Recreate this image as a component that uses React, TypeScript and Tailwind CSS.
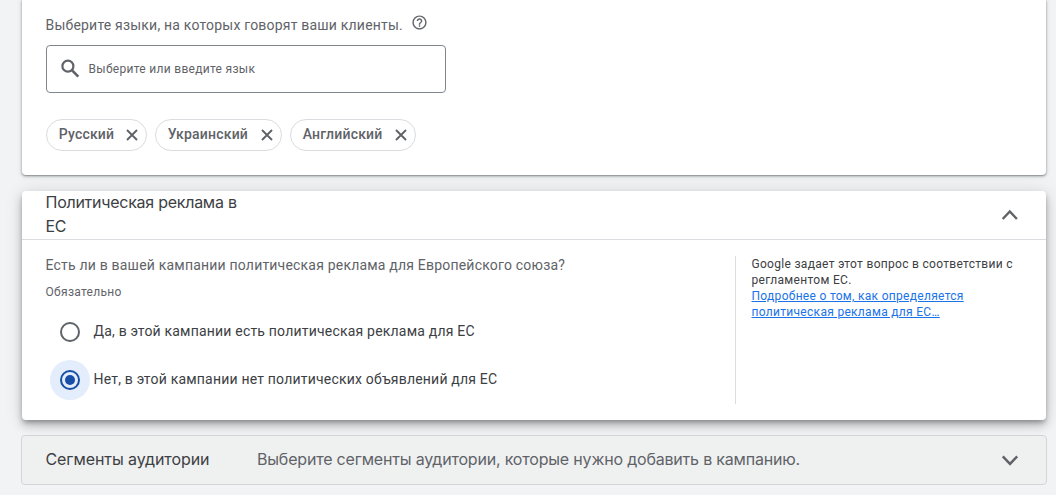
import { useState } from "react";
import { MdHelpOutline } from "react-icons/md";

const idiomas = [
  { nome: "Русский", largura: "w-[101px]" },
  { nome: "Украинский", largura: "w-[127px]" },
  { nome: "Английский", largura: "w-[126px]" },
];

const opcoes = [
  { id: "yes", label: "Да, в этой кампании есть политическая реклама для ЕС" },
  { id: "no", label: "Нет, в этой кампании нет политических объявлений для ЕС" },
];

interface RadioProps {
  label: string;
  checked: boolean;
  onSelect: () => void;
}

function SearchIcon() {
  return (
    <svg viewBox="0 0 24 24" fill="none" stroke="currentColor" className="size-6 text-[#5f6368]">
      <circle cx="9.9" cy="9.2" r="5.5" strokeWidth="2.2" />
      <path d="M13.8 13.1 20.3 19.7" strokeWidth="2.6" />
    </svg>
  );
}

function CloseIcon() {
  return (
    <svg
      viewBox="0 0 20 20"
      fill="none"
      stroke="currentColor"
      strokeWidth="1.9"
      className="size-5 text-[#5f6368]"
    >
      <path d="M5 5 15 15M15 5 5 15" />
    </svg>
  );
}

function Chevron({ up = false }: { up?: boolean }) {
  return (
    <svg
      viewBox="0 0 32 32"
      fill="none"
      stroke="currentColor"
      strokeWidth="2.4"
      className="size-8 text-[#5f6368]"
    >
      <path d={up ? "M8.7 20 15.8 12.4 22.9 20" : "M8.8 12.4 16 19.9 23.2 12.4"} />
    </svg>
  );
}

function Radio({ label, checked, onSelect }: RadioProps) {
  return (
    <button
      type="button"
      role="radio"
      aria-checked={checked}
      onClick={onSelect}
      className="flex h-12 items-center text-left"
    >
      <span
        className={`grid size-10 place-items-center rounded-full ${checked ? "bg-[#e4edfb]" : ""}`}
      >
        <span
          className={`grid size-5 place-items-center rounded-full border-2 ${
            checked ? "border-[#174ea6]" : "border-[#5f6368]"
          }`}
        >
          {checked && <span className="size-2.5 rounded-full bg-[#174ea6]" />}
        </span>
      </span>
      <span className="ml-[3.5px] pb-0.5 text-sm tracking-[0.2px] text-[#3c4043]">{label}</span>
    </button>
  );
}

function LanguagesCard() {
  return (
    <section className="mx-px h-[175px] rounded-b bg-white pl-6 shadow-[0_1px_2px_rgba(60,64,67,0.55),0_1px_4px_1px_rgba(60,64,67,0.15)]">
      <div className="flex h-[45px] items-start pt-[15px] text-[#5f6368]">
        <span className="-ml-[0.5px] text-sm tracking-[0.2px]">
          Выберите языки, на которых говорят ваши клиенты.
        </span>
        <MdHelpOutline className="-mt-px ml-2 size-[17px]" />
      </div>
      <div className="flex h-12 w-[400px] items-center rounded border border-[#80868b] pl-[11px]">
        <SearchIcon />
        <span className="ml-[6.5px] text-xs tracking-[0.3px] text-[#5f6368]">
          Выберите или введите язык
        </span>
      </div>
      <div className="mt-[26px] flex gap-2">
        {idiomas.map((idioma) => (
          <div
            key={idioma.nome}
            className={`flex h-8 items-center justify-between rounded-full border border-[#dadce0] pr-[4.5px] pl-[11.7px] text-[#5f6368] ${idioma.largura}`}
          >
            <span className="pb-0.5 text-sm font-medium tracking-[0.2px]">{idioma.nome}</span>
            <CloseIcon />
          </div>
        ))}
      </div>
    </section>
  );
}

function PoliticalAdsCard() {
  const [selected, setSelected] = useState("no");

  return (
    <section className="relative mx-px mt-4 h-[229px] rounded bg-white shadow-[0_6px_10px_rgba(0,0,0,0.18),0_1px_18px_rgba(0,0,0,0.12),0_3px_5px_-1px_rgba(0,0,0,0.28)]">
      <header className="flex h-[49px] items-center justify-between border-b border-[#dadce0] pr-5 pl-[23.5px]">
        <h2 className="w-[200px] pb-0.5 font-['Inter'] text-base leading-6 tracking-[-0.26px] text-[#3c4043]">
          Политическая реклама в ЕС
        </h2>
        <Chevron up />
      </header>
      <div className="flex pt-4">
        <div className="-mt-px w-[713px] pl-[23.5px] text-[#5f6368]">
          <p className="text-sm tracking-[0.2px]">
            Есть ли в вашей кампании политическая реклама для Европейского союза?
          </p>
          <p className="mt-[9px] text-xs tracking-[0.3px]">Обязательно</p>
          <div role="radiogroup" className="mt-2 ml-[4.5px] flex flex-col">
            {opcoes.map((opcao) => (
              <Radio
                key={opcao.id}
                label={opcao.label}
                checked={selected === opcao.id}
                onSelect={() => setSelected(opcao.id)}
              />
            ))}
          </div>
        </div>
        <aside className="h-[148px] w-[290px] border-l border-[#dadce0] pl-[15.5px] text-xs tracking-[0.3px] text-[#3c4043]">
          <p>Google задает этот вопрос в соответствии с регламентом ЕС.</p>
          <a href="#" className="block w-[230px] text-[#1a73e8] underline">
            Подробнее о том, как определяется политическая реклама для ЕС…
          </a>
        </aside>
      </div>
    </section>
  );
}

export default function App() {
  return (
    <div className="h-[498px] overflow-hidden bg-white font-['Roboto',sans-serif]">
      <main className="h-[495px] bg-[#f1f3f4] pr-[9px] pl-[21px]">
        <LanguagesCard />
        <PoliticalAdsCard />
        <section className="mt-[15px] flex h-[50px] items-center rounded border border-[#d3d6d9] bg-[#eff1f1] pr-5 pl-[23.5px] font-['Inter'] text-base">
          <h2 className="w-[211.5px] pb-0.5 tracking-[-0.08px] text-[#3c4043]">Сегменты аудитории</h2>
          <p className="flex-1 pb-0.5 tracking-[-0.19px] text-[#5f6368]">
            Выберите сегменты аудитории, которые нужно добавить в кампанию.
          </p>
          <Chevron />
        </section>
      </main>
    </div>
  );
}
